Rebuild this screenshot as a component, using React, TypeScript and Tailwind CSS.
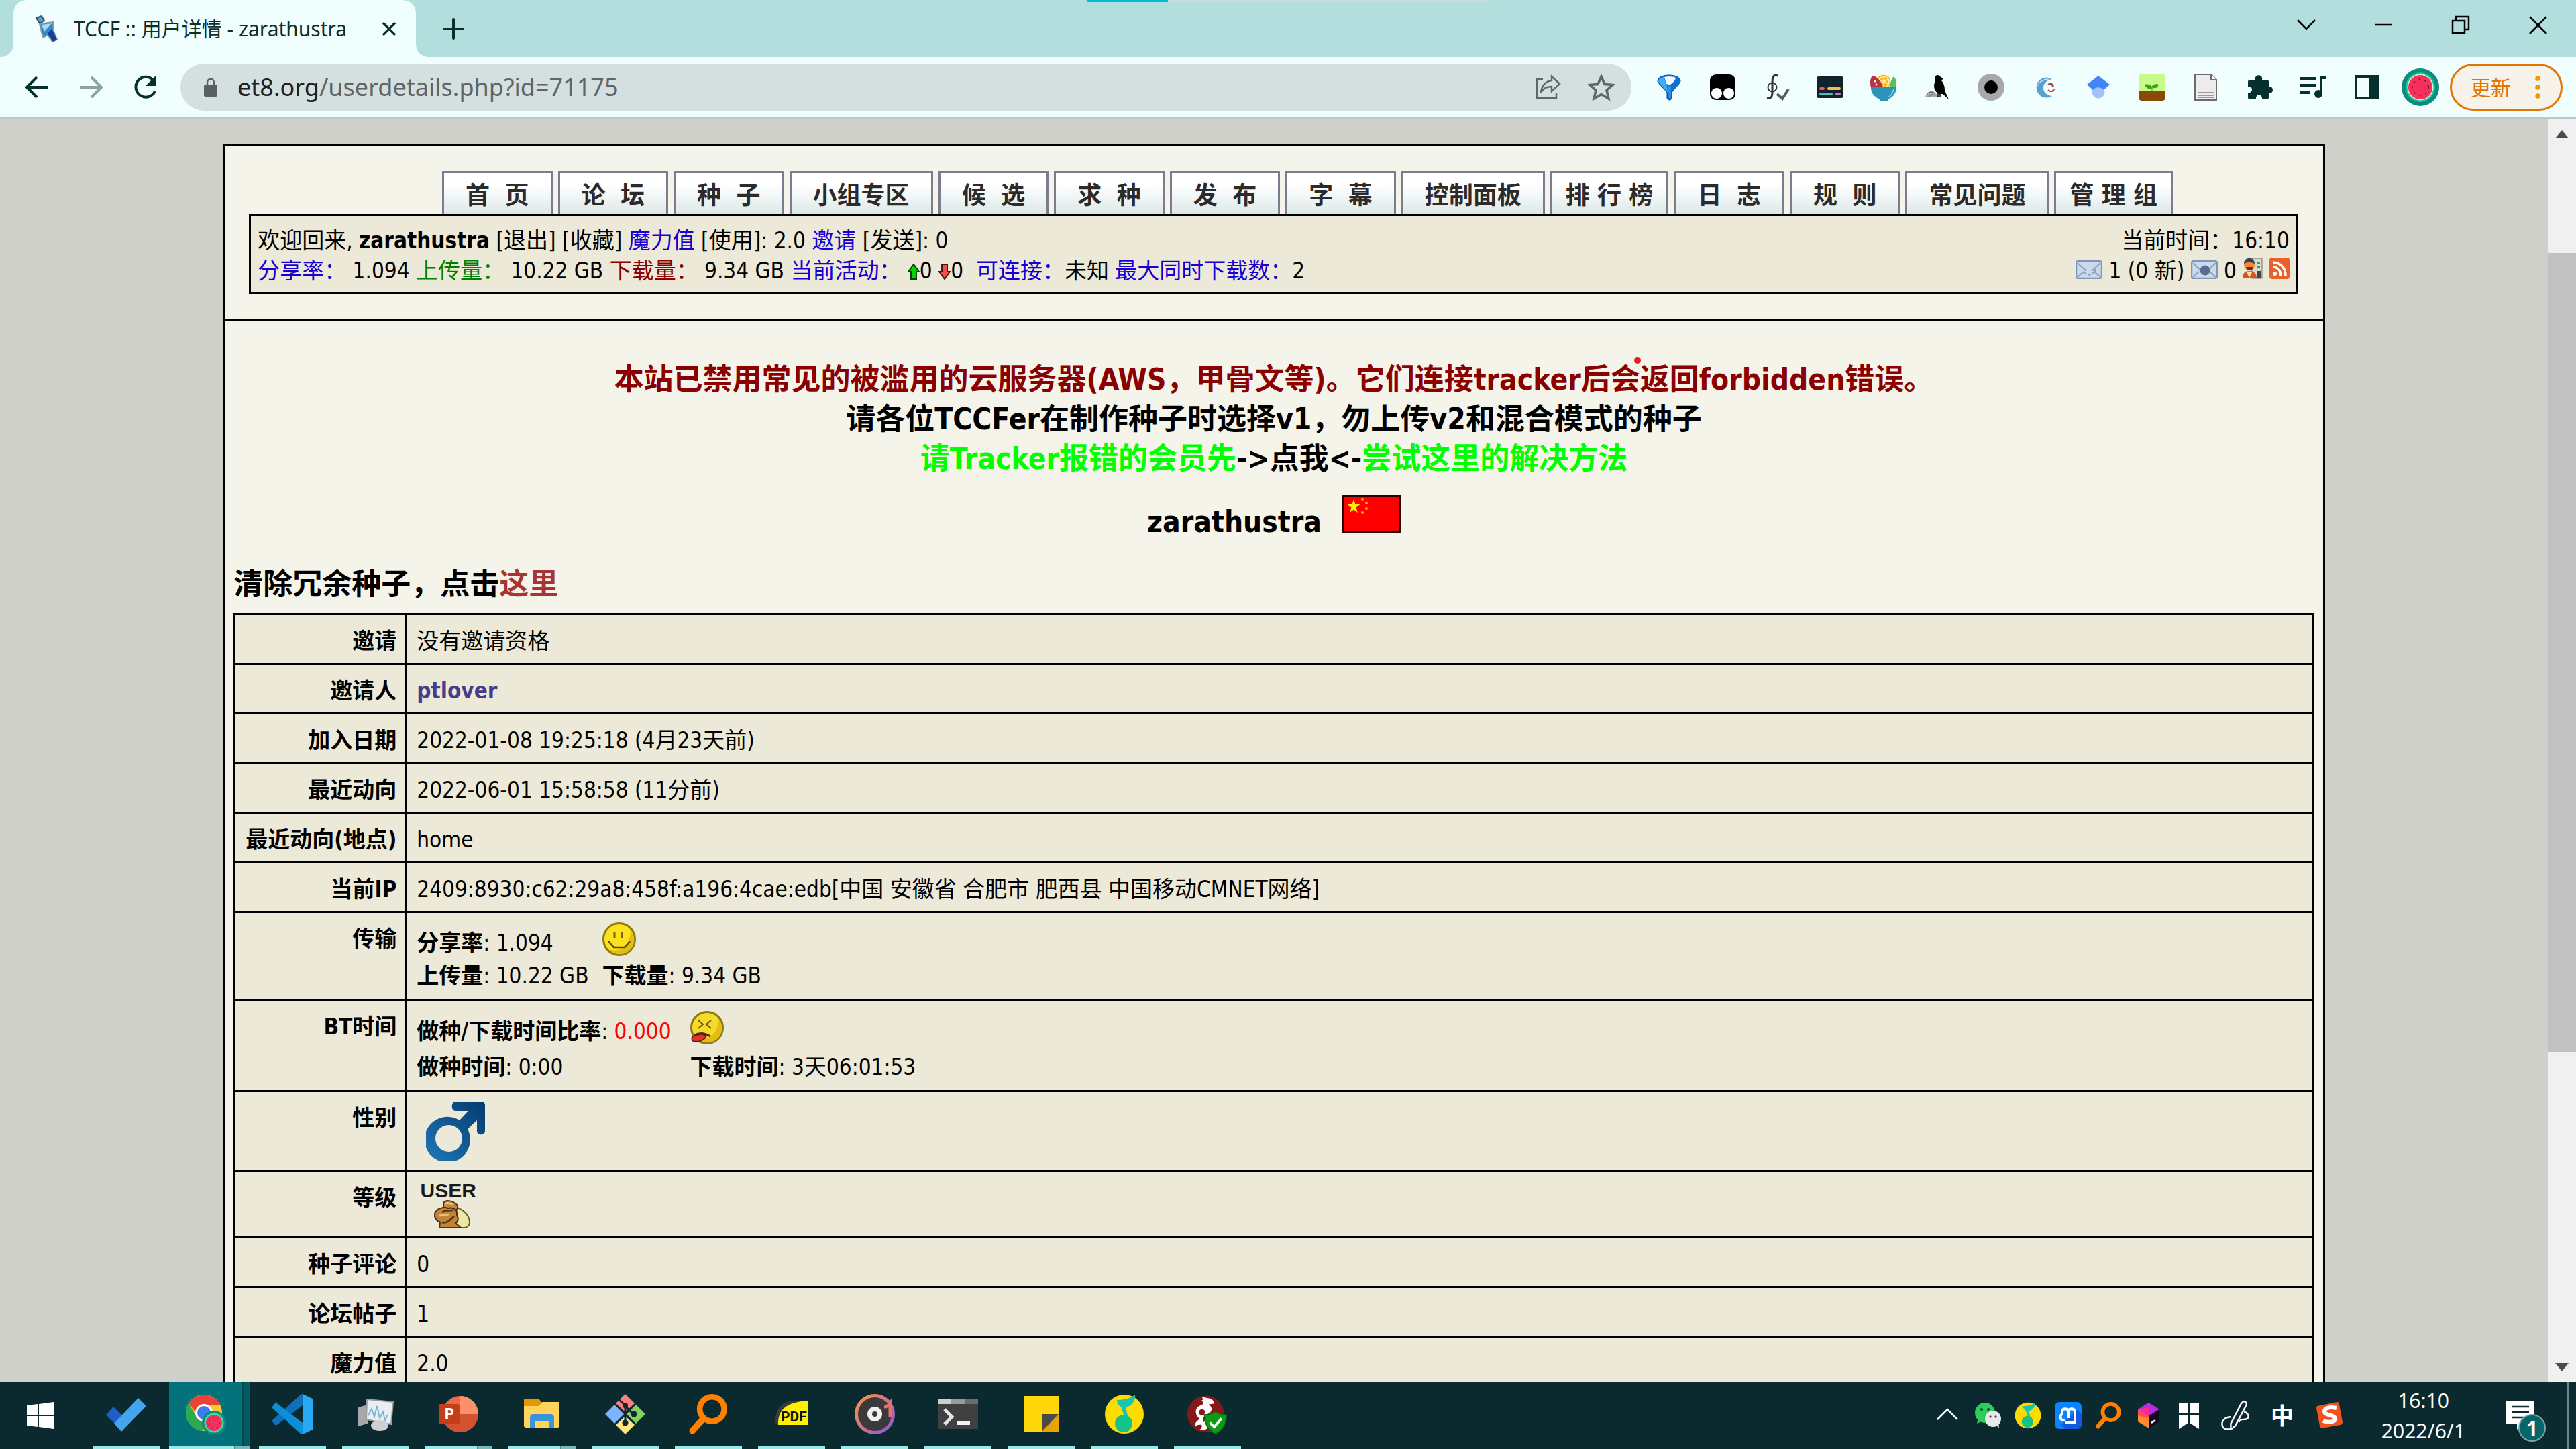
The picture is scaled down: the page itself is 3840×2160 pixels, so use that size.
import React from "react";

type IconProps = { size?: string; box?: string; children: React.ReactNode };

function Icon({ size = "w-10 h-10", box = "0 0 40 40", children }: IconProps) {
  return (
    <svg className={size + " shrink-0"} viewBox={box} fill="none" aria-hidden="true">
      {children}
    </svg>
  );
}

const OrangeLens = ({ size }: { size: string }) => (
  <Icon size={size} box="0 0 56 56">
    <circle cx="33" cy="21" r="17" stroke="#ff8000" strokeWidth="8" />
    <path d="M21 34 6 51" stroke="#ff8000" strokeWidth="9" strokeLinecap="round" />
  </Icon>
);

const QQMusic = ({ size }: { size: string }) => (
  <Icon size={size} box="0 0 60 60">
    <circle cx="30" cy="30" r="29" fill="#ffdc00" />
    <path d="M19 9c10 0 20-2 27-8 1 9-5 17-14 19l6 24-4 1-9-26c-4-2-6-6-6-10z" fill="#18c5b0" />
    <circle cx="29" cy="44" r="13" fill="#14c38a" />
  </Icon>
);

const Melon = ({ size }: { size: string }) => (
  <Icon size={size} box="0 0 56 56">
    <circle cx="28" cy="28" r="28" fill="#0f8b7b" />
    <circle cx="28" cy="28" r="22" fill="#10c8a0" />
    <circle cx="28" cy="28" r="19.500" fill="#d8f5d8" />
    <circle cx="28" cy="28" r="18" fill="#f5305c" />
    <circle cx="28" cy="28" r="12" stroke="#7a1030" strokeWidth="2" strokeDasharray="2 7" />
  </Icon>
);

/* ---------- browser chrome ---------- */

function TabStrip() {
  return (
    <header className="relative flex h-[85px] shrink-0 items-stretch bg-[#b2dfdd]">
      <div className="absolute top-0 left-[42.2%] flex h-[3px] w-[15.700%]">
        <span className="w-[20%] bg-[#00bcd4]" />
        <span className="flex-1 bg-[#cfd8d8]" />
      </div>
      <svg className="h-5 w-5 self-end" viewBox="0 0 20 20" aria-hidden="true">
        <path d="M20 0v20H0C12 20 20 12 20 0z" fill="#f0fffe" />
      </svg>
      <div className="flex w-[600px] items-center rounded-t-[20px] bg-[#f0fffe] pr-7 pl-8 text-[#0b2f2d]">
        <Icon size="w-9 h-10" box="0 0 36 40">
          <path d="M2 4l8-3 4 7-7 4z" fill="#4aa6d6" stroke="#39505e" strokeWidth="2" />
          <path d="M7 13l20-3 1 13 5 13-7 3-7-10-7 4z" fill="#2f86c8" stroke="#8b9aa5" strokeWidth="2" />
          <path d="M10 14l15-2-11 12z" fill="#a5dcf5" />
          <path d="M25 20l8 16-6 3-8-12z" fill="#123f9c" />
        </Icon>
        <span className="ml-[22px] flex-1 text-[30px] leading-10 whitespace-nowrap">TCCF :: 用户详情 - zarathustra</span>
        <button aria-label="关闭标签页">
          <Icon size="w-6 h-6" box="0 0 24 24">
            <path d="M3 3l18 18M21 3 3 21" stroke="#0b2f2d" strokeWidth="3.500" />
          </Icon>
        </button>
      </div>
      <svg className="h-5 w-5 self-end" viewBox="0 0 20 20" aria-hidden="true">
        <path d="M0 0v20h20C8 20 0 12 0 0z" fill="#f0fffe" />
      </svg>
      <button aria-label="新标签页" className="ml-4 flex w-10 items-center justify-center">
        <Icon size="w-8 h-8" box="0 0 32 32">
          <path d="M16 2v28M2 16h28" stroke="#0b2f2d" strokeWidth="4" strokeLinecap="round" />
        </Icon>
      </button>
      <div className="ml-auto flex pb-3">
        {[
          ["搜索标签页", "M7 13l13 13 13-13"],
          ["最小化", "M8 20h25"],
          ["还原", "M8 14h18v18H8zM13 14V8h19v19h-6"],
          ["关闭", "M8 8l25 25M33 8 8 33"],
        ].map(([name, d]) => (
          <button key={name} aria-label={name} className="flex w-[115px] items-center justify-center">
            <Icon>
              <path d={d} stroke="#000" strokeWidth="2.500" />
            </Icon>
          </button>
        ))}
      </div>
    </header>
  );
}

const extensions: [string, React.ReactNode][] = [
  [
    "筛选",
    <>
      <path d="M3 11C3-1 37-1 37 11c0 3-10 12-13 17v8c0 4-7 4-7 0v-8C14 23 3 14 3 11z" fill="#0a6fd8" stroke="#06468f" strokeWidth="1" />
      <path d="M4 11c2 5 9 10 14 17l-1-9-5-14c-4 1-8 3-8 6z" fill="#3fb0f7" />
      <path d="M13 5c6-2 14-1 17 1-1 5-5 8-9 11l-5-2z" fill="#eef8fe" />
      <path d="M18 18h5v18h-3z" fill="#2e8fe8" />
    </>,
  ],
  [
    "篡改猴",
    <>
      <rect x="1" y="1" width="38" height="38" rx="9" fill="#000" />
      <circle cx="11" cy="29" r="8" fill="#fff" />
      <circle cx="29" cy="29" r="8" fill="#fff" />
    </>,
  ],
  [
    "公式",
    <>
      <path d="M22 3c-7-3-8 4-8 10v14c0 7-2 11-8 9" stroke="#333" strokeWidth="3" />
      <circle cx="14" cy="20" r="6.500" stroke="#333" strokeWidth="2" />
      <path d="M21 30l8 7 9-14" stroke="#5a5a5a" strokeWidth="4" />
    </>,
  ],
  [
    "字幕",
    <>
      <rect y="4" width="40" height="32" rx="3" fill="#12222b" />
      <rect x="4" y="20" width="8" height="4" rx="2" fill="#f05560" />
      <rect x="16" y="20" width="20" height="4" rx="2" fill="#fdbb4a" />
      <rect x="4" y="28" width="20" height="4" rx="2" fill="#55b8bc" />
      <rect x="28" y="28" width="8" height="4" rx="2" fill="#c07ac8" />
    </>,
  ],
  [
    "沙拉查词",
    <>
      <path d="M1 20C-1 10 1 5 4 3c7 2 12 8 15 17z" fill="#b93340" />
      <path d="M29 19c1-7 3-12 6-15 4 4 5 10 3 15z" fill="#59c05a" />
      <circle cx="20" cy="12" r="10.500" fill="#fdb515" />
      <circle cx="20" cy="12" r="8" stroke="#fff0c0" strokeWidth="1.500" />
      <path d="M20 5v14M13 9l14 6M27 8l-14 8" stroke="#fff0c0" strokeWidth="1.500" />
      <path d="M1 20C-1 10 1 5 4 3c7 2 12 8 15 17z" fill="#b93340" />
      <circle cx="7" cy="11" r="1.500" fill="#fff" />
      <circle cx="9" cy="16" r="1.500" fill="#fff" />
      <path d="M1 20h38c0 9-5 14-12 18v2H14v-2C6 34 1 29 1 20z" fill="#2b94b8" />
      <path d="M35 23c-1 6-4 9-8 12" stroke="#9fd4e6" strokeWidth="1.500" />
    </>,
  ],
  [
    "乌鸦",
    <>
      <path d="M2 34c3-9 9-9 14-7l6 7z" fill="#aaa" />
      <path d="M4 31c3-5 9-5 12-2M8 34c2-4 6-4 9-1" stroke="#555" strokeWidth="1" />
      <path d="M16 6c1-5 7-5 9-1l4 2-3 3c4 5 5 9 5 15l6 13-9-8h-6c-7-4-8-12-6-17z" fill="#000" />
      <path d="M24 29v6M21 28v6" stroke="#000" strokeWidth="1.500" />
    </>,
  ],
  [
    "圆点",
    <>
      <circle cx="20" cy="20" r="20" fill="#a8a8a8" />
      <circle cx="20" cy="20" r="10" fill="#000" />
    </>,
  ],
  [
    "旋涡",
    <>
      <path d="M31 8A15 15 0 1 0 31 33c-6 0-13-4-13-12S25 9 31 8z" fill="#5a9fd0" />
      <path d="M28 8c-9-2-18 3-19 12 3-8 10-11 19-12z" fill="#cfe4f3" />
      <path d="M25 16c3-2 7-1 8 3M25 24c3 3 7 3 9-1M30 14l2 5" stroke="#a33a4a" strokeWidth="2" />
    </>,
  ],
  [
    "学术搜索",
    <>
      <circle cx="20" cy="27" r="9.500" fill="#a0c2fa" />
      <path d="M20 3l17 13-9 8c-3-5-13-5-16 0L3 16z" fill="#4285f4" />
    </>,
  ],
  [
    "幼苗",
    <>
      <rect width="40" height="40" rx="5" fill="#c6fb8a" />
      <path d="M0 26h40v9c0 3-2 5-5 5H5c-3 0-5-2-5-5z" fill="#8a4b08" />
      <path d="M20 26v-5M20 21c-1-4-4-5-10-5 0 4 4 7 10 5zM20 20c0-3 4-5 9-4 0 4-4 6-9 4z" fill="#3da017" stroke="#3da017" strokeWidth="1" />
    </>,
  ],
  [
    "文档",
    <>
      <path d="M4 1h24l8 8v30H4z" fill="#ececec" stroke="#6b6b6b" strokeWidth="2" />
      <path d="M28 1v8h8" fill="#fff" stroke="#6b6b6b" strokeWidth="2" />
      <path d="M8 28h24M8 32h24M8 35h24" stroke="#9a9a9a" strokeWidth="2" />
    </>,
  ],
  [
    "扩展程序",
    <path
      d="M3 12c0-2 1-3 3-3h8c-2-9 12-9 10 0h7c2 0 3 1 3 3v7c8-1 8 11 0 10v6c0 2-1 3-3 3h-7c1-9-10-9-9 0H6c-2 0-3-1-3-3v-7c8 1 8-10 0-9z"
      fill="#06302e"
    />,
  ],
  [
    "媒体控件",
    <>
      <path d="M1 7h24M1 17h24M1 28h15M32 30V6h7" stroke="#06302e" strokeWidth="4" />
      <circle cx="28" cy="30" r="6" fill="#06302e" />
    </>,
  ],
  ["侧边栏", <path d="M2 2h36v36H2zM6 6v28h17V6z" fill="#06302e" fillRule="evenodd" />],
];

function Toolbar() {
  return (
    <div className="flex h-[93px] shrink-0 items-center border-b-[3px] border-[#b9cccb] bg-[#f0fffe] pl-[14px]">
      {[
        ["后退", "M37 20H6M20 5 5 20l15 15", "#06302e"],
        ["前进", "M3 20h31M20 5l15 15-15 15", "#8ba3a1"],
      ].map(([name, d, c]) => (
        <button key={name} aria-label={name} className="flex w-[81px] justify-center">
          <Icon>
            <path d={d} stroke={c} strokeWidth="4" />
          </Icon>
        </button>
      ))}
      <button aria-label="重新加载" className="flex w-[81px] justify-center">
        <Icon>
          <path d="M34 26A15 15 0 1 1 31 9" stroke="#06302e" strokeWidth="4" />
          <path d="M36 2v16H20z" fill="#06302e" />
        </Icon>
      </button>
      <div className="mr-4 ml-3 flex h-[70px] flex-1 items-center rounded-full bg-[#d4e0df] pr-[5px] pl-[35px]">
        <Icon size="w-5 h-7" box="0 0 20 28">
          <rect y="10" width="20" height="18" rx="2.500" fill="#5a5f63" />
          <path d="M5 11V7c0-7 10-7 10 0v4" stroke="#5a5f63" strokeWidth="2.500" />
        </Icon>
        <a href="#address" className="ml-[30px] flex-1 text-[36px] leading-[48px] whitespace-nowrap text-[#5f6466]">
          <span className="text-[#202124]">et8.org</span>/userdetails.php?id=71175
        </a>
        <button aria-label="分享" className="flex w-[78px] justify-center">
          <Icon>
            <path d="M12 8H3v28h29v-7" stroke="#5a6866" strokeWidth="2.500" />
            <path d="M25 4l12 11-12 11v-7c-8 0-13 3-16 9 1-10 7-17 16-18z" stroke="#5a6866" strokeWidth="2.500" />
          </Icon>
        </button>
        <button aria-label="收藏" className="flex w-[80px] justify-center">
          <Icon>
            <path d="M20 4l5 11.500 12 1-9 8 3 12.500-11-6.500L9 37l3-12.500-9-8 12-1z" stroke="#5a6866" strokeWidth="3.500" />
          </Icon>
        </button>
      </div>
      {extensions.map(([name, art]) => (
        <button key={name} aria-label={name} className="flex w-20 justify-center">
          <Icon>{art}</Icon>
        </button>
      ))}
      <button aria-label="个人资料" className="flex w-20 justify-center">
        <Melon size="w-14 h-14" />
      </button>
      <button className="mr-5 ml-1 flex h-[70px] w-[168px] items-center justify-between rounded-full border-[3px] border-[#e37400] bg-[#f8f3ea] pr-[30px] pl-7 text-[30px] text-[#e37400]">
        更新
        <Icon size="w-2 h-9" box="0 0 8 36">
          <circle cx="4" cy="5" r="3.800" fill="#f29900" />
          <circle cx="4" cy="18" r="3.800" fill="#f29900" />
          <circle cx="4" cy="31" r="3.800" fill="#f29900" />
        </Icon>
      </button>
    </div>
  );
}

/* ---------- site ---------- */

const navItems = [
  "首  页",
  "论  坛",
  "种  子",
  "小组专区",
  "候  选",
  "求  种",
  "发  布",
  "字  幕",
  "控制面板",
  "排 行 榜",
  "日  志",
  "规  则",
  "常见问题",
  "管 理 组",
];

function MainNav() {
  return (
    <nav className="flex justify-center gap-2 pl-[100px]">
      {navItems.map((label) => (
        <a
          key={label}
          href="#nav"
          className={
            "border-x-[3px] border-t-[3px] border-[#7c7c8e] bg-linear-to-b from-white from-30% to-[#dce8e8] pt-3 pb-[5px] text-[36px] leading-[44px] font-bold whitespace-pre text-[#2f2a2a] " +
            (label.length === 5 ? "px-5" : "px-8")
          }
        >
          {label}
        </a>
      ))}
    </nav>
  );
}

const ArrowGlyph = ({ up }: { up: boolean }) => (
  <svg className="inline-block h-6 w-[18px] align-[-2px]" viewBox="0 0 18 24" aria-hidden="true">
    <path
      d={up ? "M9 1l8 11h-4v11H5V12H1z" : "M9 23l8-11h-4V1H5v11H1z"}
      fill={up ? "#00d800" : "#f05050"}
      stroke={up ? "#123a12" : "#4a1414"}
      strokeWidth="2"
    />
  </svg>
);

const Envelope = ({ out }: { out?: boolean }) => (
  <svg className="inline-block h-7 w-10 align-[-1px]" viewBox="0 0 40 28" aria-hidden="true">
    <rect x="1" y="1" width="38" height="26" rx="3" fill="#cbd9ea" stroke="#7f98b8" strokeWidth="2.500" />
    <path d="M3 4l13 12M37 4 24 16M3 25l9-8M37 25l-9-8" stroke="#8ba2bf" strokeWidth="2" />
    {out ? (
      <circle cx="21" cy="15" r="7.500" fill="#566f93" />
    ) : (
      <path d="M13 18c5 5 9 5 14 0M29 13v5" stroke="#8ba2bf" strokeWidth="2" fill="none" strokeDasharray="4 3" />
    )}
  </svg>
);

function InfoBar() {
  return (
    <section className="mr-[37px] ml-[36px] flex justify-between border-[3px] border-black bg-[#ece9d8] px-[10px] pt-[14px] pb-[10px] text-[33px] leading-[45px]">
      <div className="whitespace-pre">
        <p>
          欢迎回来, <b>zarathustra</b> [<a href="#out">退出</a>] [<a href="#fav">收藏</a>]{" "}
          <span className="text-[#1900d1]">魔力值</span> [<a href="#use">使用</a>]: 2.0{" "}
          <span className="text-[#1900d1]">邀请</span> [<a href="#send">发送</a>]: 0
        </p>
        <p>
          <span className="text-[#1900d1]">分享率：</span> 1.094 <span className="text-[#008000]">上传量：</span> 10.22 GB{" "}
          <span className="text-[#8b0000]">下载量：</span> 9.34 GB <span className="text-[#1900d1]">当前活动：</span>{" "}
          <ArrowGlyph up />0 <ArrowGlyph up={false} />0{"  "}
          <span className="text-[#1900d1]">可连接：</span>未知 <span className="text-[#1900d1]">最大同时下载数：</span>2
        </p>
      </div>
      <div className="text-right whitespace-pre">
        <p>当前时间：16:10</p>
        <p>
          <Envelope /> 1 (0 新) <Envelope out /> 0{" "}
          <svg className="inline-block h-8 w-[30px] align-[-1px]" viewBox="0 0 30 32" aria-hidden="true">
            <rect x="14" y="1" width="15" height="30" fill="#d8d8cc" stroke="#777" strokeWidth="1" />
            <path d="M22 6h4v4h-4zM22 12h4v4h-4z" fill="#3aa050" />
            <circle cx="10" cy="11" r="8" fill="#f08a30" />
            <path d="M2 9c0-11 16-11 16 0l-8-3z" fill="#3a3f55" />
            <path d="M5 14h11l-2 4H7z" fill="#8c1a10" />
            <path d="M0 31c0-8 4-11 10-11s11 3 11 11z" fill="#d9531e" />
            <path d="M6 22l4 8 4-8z" fill="#ffe0a0" />
            <path d="M22 20h5v11h-5z" fill="#444" />
          </svg>{" "}
          <svg className="inline-block h-8 w-[30px] align-[-1px]" viewBox="0 0 30 32" aria-hidden="true">
            <rect width="30" height="32" rx="4" fill="#e9622a" />
            <circle cx="8" cy="24" r="3" fill="#fff" />
            <path d="M5 14c7 0 12 5 12 13M5 7c11 0 19 8 19 20" stroke="#fff" strokeWidth="3.500" fill="none" />
          </svg>
        </p>
      </div>
    </section>
  );
}

const Smiley = () => (
  <Icon size="w-[50px] h-[50px]" box="0 0 50 50">
    <circle cx="25" cy="25" r="23.500" fill="#fde01e" stroke="#8d7a14" strokeWidth="3" />
    <path d="M42 12a21 21 0 0 1-32 28c14 6 32-4 32-28z" fill="#e3bd14" />
    <path d="M18 14v9M29 14v9" stroke="#7a6512" strokeWidth="3" />
    <path d="M9 28l8 9h16l8-9" stroke="#5a4a10" strokeWidth="2.500" />
  </Icon>
);

const SickFace = () => (
  <Icon size="w-[50px] h-[50px]" box="0 0 50 50">
    <circle cx="25" cy="25" r="23.500" fill="#f6dc28" stroke="#8d7a14" strokeWidth="3" />
    <path d="M42 12a21 21 0 0 1-32 28c14 6 32-4 32-28z" fill="#e3bd14" />
    <path d="M12 14l7 6-7 6M31 14l-7 6 7 6" stroke="#6a5812" strokeWidth="2" />
    <path d="M6 36c8-4 16-3 24 2" stroke="#4a3510" strokeWidth="3" />
    <path d="M4 38c6-3 14-4 20-1-2 7-12 10-20 8-3-3-2-5 0-7z" fill="#e2362a" stroke="#5a1510" strokeWidth="1.500" />
  </Icon>
);

const Male = () => (
  <Icon size="w-[88px] h-[88px]" box="0 0 88 88">
    <defs>
      <linearGradient id="male" x1="0" y1="1" x2="1" y2="0">
        <stop offset="0" stopColor="#1f79b8" />
        <stop offset="1" stopColor="#033a70" />
      </linearGradient>
    </defs>
    <path
      d="M44 0h38c4 0 6 2 6 6v38c0 7-12 7-12 0V28L62 41a34 34 0 1 1-12-13L63 14H44c-7 0-7-14 0-14zM34 35a20 20 0 1 0 .1 0z"
      fill="url(#male)"
      fillRule="evenodd"
    />
  </Icon>
);

const Pile = () => (
  <Icon size="w-[54px] h-[42px]" box="0 0 54 42">
    <path d="M34 11c12 4 19 13 19 22 0 5-4 8-8 8H30z" fill="#ece7a4" stroke="#6b5a20" strokeWidth="2" />
    <path d="M14 5c2-6 14-5 20 2 3 5 0 8-4 9l-16-5z" fill="#c48a3e" stroke="#4a2f10" strokeWidth="2" />
    <path d="M1 20c3-9 14-10 20-8 8-2 14 2 13 10 3 6 2 10-2 12l8 7H8L9 33C3 30 0 26 1 20z" fill="#c28438" stroke="#4a2f10" strokeWidth="2" />
    <path d="M12 33c8 2 12-4 18-9M12 18c6-4 10-2 16-3" stroke="#5a3408" strokeWidth="2.500" />
    <path d="M8 23c6-2 10 0 14-2M17 5c4-1 8 0 11 2" stroke="#eabf78" strokeWidth="3" />
  </Icon>
);

function Row({ label, children }: { label: string; children: React.ReactNode }) {
  return (
    <tr>
      <th
        scope="row"
        className="border-[3px] border-black pt-4 pr-[13px] pb-[10px] pl-[15px] text-right align-top font-bold whitespace-nowrap"
      >
        {label}
      </th>
      <td className="w-full border-[3px] border-black px-[14px] align-top">{children}</td>
    </tr>
  );
}

const Plain = ({ children }: { children: React.ReactNode }) => <div className="pt-4 pb-[10px]">{children}</div>;

function Details() {
  return (
    <table className="w-full border-collapse bg-[#ece9d8] text-[33px] leading-[45px]">
      <tbody>
        <Row label="邀请">
          <Plain>没有邀请资格</Plain>
        </Row>
        <Row label="邀请人">
          <Plain>
            <a href="#user" className="font-bold text-[#483d8b]">
              ptlover
            </a>
          </Plain>
        </Row>
        <Row label="加入日期">
          <Plain>2022-01-08 19:25:18 (4月23天前)</Plain>
        </Row>
        <Row label="最近动向">
          <Plain>2022-06-01 15:58:58 (11分前)</Plain>
        </Row>
        <Row label="最近动向(地点)">
          <Plain>home</Plain>
        </Row>
        <Row label="当前IP">
          <Plain>2409:8930:c62:29a8:458f:a196:4cae:edb[中国 安徽省 合肥市 肥西县 中国移动CMNET网络]</Plain>
        </Row>
        <Row label="传输">
          <div className="grid grid-cols-[auto_auto] items-end justify-start gap-x-5 gap-y-1 pt-[14px] pb-3 whitespace-nowrap">
            <span className="pt-2">
              <b>分享率</b>: 1.094
            </span>
            <span className="self-start">
              <Smiley />
            </span>
            <span>
              <b>上传量</b>: 10.22 GB
            </span>
            <span>
              <b>下载量</b>: 9.34 GB
            </span>
          </div>
        </Row>
        <Row label="BT时间">
          <div className="grid grid-cols-[auto_auto] items-end justify-start gap-x-[28px] gap-y-2 pt-[15px] pb-3 whitespace-nowrap">
            <span className="pt-2">
              <b>做种/下载时间比率</b>: <span className="text-[#ff0000]">0.000</span>
            </span>
            <span className="self-start">
              <SickFace />
            </span>
            <span>
              <b>做种时间</b>: 0:00
            </span>
            <span>
              <b>下载时间</b>: 3天06:01:53
            </span>
          </div>
        </Row>
        <Row label="性别">
          <div className="pt-[14px] pb-[14px] pl-[14px]">
            <Male />
          </div>
        </Row>
        <Row label="等级">
          <div className="flex w-[94px] flex-col items-center pt-[14px] pb-3">
            <span className="font-['Liberation_Sans',sans-serif] text-[30px] leading-7 font-bold text-[#1a1a1a]">USER</span>
            <span className="pl-3">
              <Pile />
            </span>
          </div>
        </Row>
        <Row label="种子评论">
          <Plain>0</Plain>
        </Row>
        <Row label="论坛帖子">
          <Plain>1</Plain>
        </Row>
        <Row label="魔力值">
          <Plain>2.0</Plain>
        </Row>
      </tbody>
    </table>
  );
}

const Flag = () => (
  <Icon size="w-[88px] h-[56px]" box="0 0 88 56">
    <rect x="1.500" y="1.500" width="85" height="53" fill="#ff0000" stroke="#2a0000" strokeWidth="3" />
    <path d="M18 7l2.500 7h7l-6 4.500 2.500 7.500-6-4.500-6 4.500 2.500-7.500-6-4.500h7z" fill="#ffee00" />
    <circle cx="31" cy="7" r="2" fill="#f8b800" />
    <circle cx="37" cy="12" r="2" fill="#f8b800" />
    <circle cx="37" cy="20" r="2" fill="#f8b800" />
    <circle cx="31" cy="26" r="2" fill="#f8b800" />
  </Icon>
);

function Site() {
  return (
    <div className="flex min-h-0 flex-1 overflow-hidden bg-[#cfd0ca]">
      <div className="min-w-0 flex-1 px-[8.650%] pt-9 font-['DejaVu_Sans_Condensed','Noto_Sans_CJK_SC',sans-serif] text-black">
        <div className="border-[3px] border-black bg-[#f5f4ea]">
          <div className="border-b-[3px] border-black pt-[38px] pb-9">
            <MainNav />
            <InfoBar />
          </div>
          <main className="px-[13px] pt-[58px]">
            <div className="relative text-center text-[44px] leading-[59px] font-bold">
              <p className="text-[#8b0000]">
                本站已禁用常见的被滥用的云服务器(AWS，甲骨文等)。它们连接tracker后会返回forbidden错误。
              </p>
              <p>请各位TCCFer在制作种子时选择v1，勿上传v2和混合模式的种子</p>
              <p className="text-[#00ff00]">
                请Tracker报错的会员先<a href="#help" className="text-black">-&gt;点我&lt;-</a>尝试这里的解决方法
              </p>
              <span className="absolute -top-1 left-[67.300%] h-[10px] w-[10px] rounded-full bg-[#ee1c1c]" />
            </div>
            <h1 className="mt-[25px] flex items-start justify-center gap-[30px] text-[44px] leading-[59px] font-bold">
              <span className="pt-[10px]">zarathustra</span>
              <Flag />
            </h1>
            <h2 className="mt-[34px] mb-[14px] text-[44px] leading-[59px] font-bold">
              清除冗余种子，点击<a href="#clean" className="text-[#aa3333]">这里</a>
            </h2>
            <Details />
          </main>
        </div>
      </div>
      <div className="flex w-[42px] flex-col items-center bg-[#f0f0f0] py-4" aria-hidden="true">
        <svg className="h-3 w-5" viewBox="0 0 20 12">
          <path d="M10 0l10 12H0z" fill="#4a4a4a" />
        </svg>
        <div className="flex w-full flex-1 flex-col py-6">
          <div className="h-[8.250%]" />
          <div className="h-[67%] w-full bg-[#c1c1c1]" />
        </div>
        <svg className="h-3 w-5" viewBox="0 0 20 12">
          <path d="M10 12 0 0h20z" fill="#4a4a4a" />
        </svg>
      </div>
    </div>
  );
}

/* ---------- taskbar ---------- */

const S = "w-[60px] h-[60px]";

const apps: { name: string; art: React.ReactNode; active?: boolean; stack?: boolean }[] = [
  {
    name: "待办",
    art: (
      <Icon size={S} box="0 0 60 60">
        <path d="M0 31l11-12 14 14-11 12z" fill="#1f5ec4" />
        <path d="M48 6l12 12-37 38-11-12z" fill="#42a5f0" />
      </Icon>
    ),
  },
  {
    name: "浏览器",
    active: true,
    stack: true,
    art: (
      <Icon size={S} box="0 0 60 60">
        <circle cx="27" cy="28" r="27" fill="#fcc934" />
        <path d="M4 14a27 27 0 0 1 47 2H27c-8 0-12 6-12 12z" fill="#ea4335" />
        <path d="M4 14 16 34c3 5 8 7 14 6l-6 15A27 27 0 0 1 4 14z" fill="#2da94f" />
        <circle cx="27" cy="28" r="13" fill="#fff" />
        <circle cx="27" cy="28" r="10" fill="#3b7de9" />
        <circle cx="42" cy="43" r="18" fill="#0f8b7b" />
        <circle cx="42" cy="43" r="14.500" fill="#3ddca8" />
        <circle cx="42" cy="43" r="12" fill="#f5305c" />
        <circle cx="42" cy="43" r="8" stroke="#8a1535" strokeWidth="1.500" strokeDasharray="2 5" />
      </Icon>
    ),
  },
  {
    name: "代码编辑器",
    art: (
      <Icon size={S} box="0 0 60 60">
        <path d="M45 0v17L7 46c-2 1-3 0-4-1l-3-4v-2L42 1z" fill="#0f6fb8" />
        <path d="M45 60V43L7 14c-2-1-3 0-4 1l-3 4v2l42 38z" fill="#0b8fd8" />
        <path d="M45 0l15 7v46l-15 7z" fill="#29a9f2" />
      </Icon>
    ),
  },
  {
    name: "资源监视器",
    art: (
      <Icon size={S} box="0 0 60 60">
        <path d="M4 20l14-4v28L4 48z" fill="#a8a8a8" />
        <path d="M17 8l39 4-3 33-37-7z" fill="#e8eef2" stroke="#9a9a9a" strokeWidth="2" />
        <path d="M19 32l5-10 4 12 4-16 4 18 5-9 3 12 4-8" stroke="#7fb4dc" strokeWidth="2" />
        <ellipse cx="36" cy="47" rx="13" ry="8" fill="#cfcfcf" />
      </Icon>
    ),
  },
  {
    name: "演示文稿",
    stack: true,
    art: (
      <Icon size={S} box="0 0 60 60">
        <circle cx="32" cy="30" r="27" fill="#ed6c47" />
        <path d="M32 3a27 27 0 0 1 27 27H32z" fill="#ff8f6b" />
        <path d="M5 30h54a27 27 0 0 1-54 0z" fill="#d35230" />
        <rect y="15" width="31" height="30" rx="3" fill="#c43e1c" />
        <text x="8" y="38" fontSize="24" fontWeight="700" fill="#fff" fontFamily="Open Sans, sans-serif">P</text>
      </Icon>
    ),
  },
  {
    name: "文件资源管理器",
    stack: true,
    art: (
      <Icon size={S} box="0 0 60 60">
        <path d="M3 9c0-1 1-2 2-2h20l4 5v6H3z" fill="#e09a00" />
        <path d="M3 18h22l5-6h26v35c0 2-1 3-3 3H6c-2 0-3-1-3-3z" fill="#ffd35c" />
        <path d="M12 51V35c0-3 2-5 5-5h26c3 0 5 2 5 5v16h-8V41H20v10z" fill="#3a94dd" />
      </Icon>
    ),
  },
  {
    name: "版本管理",
    art: (
      <Icon size={S} box="0 0 60 60">
        <path d="M30 0l14 14-14 13-14-13z" fill="#ff7f80" />
        <path d="M14 16l14 14-14 14L0 30z" fill="#80b3ff" />
        <path d="M46 16l14 14-14 14-14-14z" fill="#87d25f" />
        <path d="M30 33l14 13-14 14-14-14z" fill="#ffe680" />
        <path d="M20 8l10 9v27M30 18l12 12" stroke="#0b2a30" strokeWidth="3" />
        <circle cx="30" cy="17" r="4" fill="#0b2a30" />
        <circle cx="43" cy="30" r="4.500" fill="#0b2a30" />
        <circle cx="30" cy="43" r="4.500" fill="#0b2a30" />
      </Icon>
    ),
  },
  { name: "搜索", art: <OrangeLens size={S} /> },
  {
    name: "PDF",
    art: (
      <Icon size={S} box="0 0 60 60">
        <path d="M6 46C4 26 14 10 34 10h20L20 40z" fill="#3a3a3a" />
        <path d="M10 46c-1-22 12-34 44-36v36z" fill="#ffee00" />
        <text x="14" y="41" fontSize="21" fontWeight="700" fill="#111" fontFamily="Roboto, sans-serif">PDF</text>
      </Icon>
    ),
  },
  {
    name: "音乐播放器",
    art: (
      <Icon size={S} box="0 0 60 60">
        <defs>
          <linearGradient id="disc" x1="0" y1="0" x2="1" y2="1">
            <stop offset="0" stopColor="#ff9a3c" />
            <stop offset="0.600" stopColor="#c9689a" />
            <stop offset="1" stopColor="#6c5ce0" />
          </linearGradient>
        </defs>
        <circle cx="30" cy="30" r="30" fill="url(#disc)" />
        <circle cx="30" cy="30" r="25" fill="#3a3a3c" />
        <path d="M44 19c4 0 7-2 9-5v20" stroke="#e0736a" strokeWidth="5" />
        <circle cx="30" cy="30" r="11" fill="#f0f0f0" />
        <circle cx="30" cy="30" r="4" fill="#3a3a3c" />
      </Icon>
    ),
  },
  {
    name: "终端",
    art: (
      <Icon size={S} box="0 0 60 60">
        <rect y="8" width="60" height="44" rx="1" fill="#3f4042" />
        <path d="M0 8h20v7H0z" fill="#cfcfcf" />
        <path d="M20 8h20v7H20z" fill="#9a9a9a" />
        <path d="M40 8h20v7H40z" fill="#6c6c6c" />
        <path d="M10 23l11 11-11 11" stroke="#e6e6e6" strokeWidth="5" />
        <rect x="28" y="40" width="20" height="6" fill="#f2f2f2" />
      </Icon>
    ),
  },
  {
    name: "便笺",
    art: (
      <Icon size={S} box="0 0 60 60">
        <path d="M4 3h52v27L31 56H4z" fill="#ffd60a" />
        <path d="M31 30h25L31 56z" fill="#4a4a4a" />
        <path d="M56 30v26H31z" fill="#e8a400" />
      </Icon>
    ),
  },
  { name: "QQ音乐", art: <QQMusic size={S} /> },
  {
    name: "WireGuard",
    art: (
      <Icon size={S} box="0 0 66 64">
        <circle cx="30" cy="32" r="30" fill="#88171a" />
        <path d="M24 4l10 2c7 1 10 5 9 9l-8 1c8 6 5 13-2 16-8 4-9 9-6 13 4-3 9-1 10 4-2 8-10 10-18 9 4-2 6-5 4-9-4 1-7-1-11 5 0-9 5-12 9-14-9-6-10-18 0-22 7-2 6-6 2-8l3-2z" fill="#fff" />
        <circle cx="24" cy="29" r="5" fill="#88171a" />
        <path d="M46 28c6 4 12 5 18 5 0 14-5 25-18 31-13-6-18-17-18-31 6 0 12-1 18-5z" fill="#0a9a14" stroke="#056a0c" strokeWidth="1.500" />
        <path d="M37 46l7 7 12-14" stroke="#fff" strokeWidth="4" />
      </Icon>
    ),
  },
];

const T = "w-10 h-10";

const tray: [string, React.ReactNode, string][] = [
  ["显示隐藏的图标", <Icon size={T}><path d="M5 26l15-15 15 15" stroke="#fff" strokeWidth="2.500" /></Icon>, "w-[60px]"],
  [
    "微信",
    <Icon size={T}>
      <circle cx="16" cy="16" r="15" fill="#2ecc5e" />
      <path d="M6 24l-2 8 9-4z" fill="#2ecc5e" />
      <circle cx="11" cy="11" r="2" fill="#0b4a20" />
      <circle cx="21" cy="11" r="2" fill="#0b4a20" />
      <circle cx="28" cy="25" r="12" fill="#e9e9e9" />
      <path d="M31 34l6 4-1-7z" fill="#e9e9e9" />
      <circle cx="24" cy="22" r="1.800" fill="#555" />
      <circle cx="32" cy="22" r="1.800" fill="#555" />
    </Icon>,
    "w-[60px]",
  ],
  ["QQ音乐", <QQMusic size={T} />, "w-[60px]"],
  [
    "网盘",
    <Icon size={T}>
      <rect width="40" height="40" rx="7" fill="#0a84ff" />
      <path d="M33 12l7 6v15c0 4-3 7-7 7H16l-6-6z" fill="#1457e0" />
      <path d="M20 24V14c0-5-9-5-9 0v4c-4 2-4 10 4 9M20 14c0-5 10-5 10 0v17H16" stroke="#fff" strokeWidth="4" />
    </Icon>,
    "w-[60px]",
  ],
  ["搜索", <OrangeLens size={T} />, "w-[60px]"],
  [
    "开发工具",
    <Icon size={T}>
      <path d="M20 1L4 11v18l16 10z" fill="#ff4a5a" />
      <path d="M4 20v9l16 10V24z" fill="#ff8a2a" />
      <path d="M20 1l16 10-16 10L4 11z" fill="#b82ae8" />
      <path d="M4 11l16 10V8z" fill="#ff2a8a" />
      <path d="M36 11v18L20 39V21z" fill="#100818" />
      <path d="M24 31l6-4" stroke="#fff" strokeWidth="2.500" />
    </Icon>,
    "w-[60px]",
  ],
  [
    "书签",
    <Icon size={T}>
      <path d="M5 2h14v15H5zM21 2h14v15H21zM5 20h14v11L5 40zM21 20h14v20L21 31z" fill="#fff" />
    </Icon>,
    "w-[60px]",
  ],
  [
    "手写笔",
    <Icon size="w-11 h-11">
      <path d="M31 1c3 0 5 2 4 5L20 34l-6 5 0-8L28 4z" stroke="#fff" strokeWidth="2.200" />
      <path d="M14 22c-8 0-14 6-11 13 2 4 7 4 10 3M32 15c6 2 8 8 3 10-5 1-8-1-10 4" stroke="#fff" strokeWidth="2.200" />
    </Icon>,
    "w-[78px]",
  ],
  ["输入法", <span className="text-[34px] leading-10 font-bold text-white">中</span>, "w-[62px]"],
  [
    "搜狗输入法",
    <Icon size={T}>
      <path d="M1 6l30-6c2 0 3 1 3 3l5 27c0 2-1 3-3 4L8 39c-2 0-3-1-3-3L0 9z" fill="#f4511e" />
      <path d="M30 9c-8-2-18-1-18 5 0 7 16 4 16 11 0 5-10 6-18 3" stroke="#fff" strokeWidth="6" />
    </Icon>,
    "w-[80px]",
  ],
];

function Taskbar() {
  return (
    <footer className="flex h-[100px] shrink-0 items-stretch bg-[#0b2a30]">
      <button aria-label="开始" className="flex w-[126px] items-center pl-10">
        <Icon size={T}>
          <path d="M0 5l16-2v16H0zM18 3l22-3v19H18zM0 21h16v16L0 35zM18 21h22v19l-22-3z" fill="#fff" />
        </Icon>
      </button>
      {apps.map((a) => (
        <button key={a.name} aria-label={a.name} className={"flex w-[124px] " + (a.active ? "px-[2px]" : "px-3")}>
          <span className={"flex w-full flex-col self-stretch " + (a.active ? "bg-[#04727a]" : "")}>
            <span className="flex flex-1 justify-end">
              <span className="flex flex-1 items-center justify-center">{a.art}</span>
              {a.active && <span className="w-[11px] border-l-[3px] border-[#04464e] bg-[#035b63]" />}
            </span>
            <span className="flex h-[5px] bg-[#99e8ea]">
              {a.stack && <span className="ml-auto w-[23px] border-l-2 border-[#4f8a8c] bg-[#7ab8ba]" />}
            </span>
          </span>
        </button>
      ))}
      <div className="ml-auto flex items-center text-white">
        {tray.map(([name, art, w]) => (
          <button key={name} aria-label={name} className={"flex justify-center " + w}>
            {art}
          </button>
        ))}
        <div className="w-[199px] text-center text-[30px] leading-[45px]">
          <p>16:10</p>
          <p>2022/6/1</p>
        </div>
        <button aria-label="通知" className="relative ml-6 flex w-[91px] items-center self-stretch">
          <Icon size="w-11 h-11" box="0 0 44 44">
            <path d="M0 0h42v34H24l-8 9v-9H0z" fill="#fff" />
            <path d="M8 9h26M8 17h26M8 25h18" stroke="#0b2a30" strokeWidth="2.500" />
          </Icon>
          <span className="absolute bottom-[11px] left-[18px] flex h-[41px] w-[41px] items-center justify-center rounded-full border-2 border-[#7fa5a8] bg-[#04656c] text-[30px] leading-none font-bold">
            1
          </span>
        </button>
        <span className="mr-[11px] self-stretch border-l-2 border-[#6f8589]" />
      </div>
    </footer>
  );
}

export default function App() {
  return (
    <div
      lang="zh-CN"
      className="flex h-screen w-full flex-col overflow-hidden font-['Noto_Sans','Noto_Sans_CJK_SC',sans-serif]"
    >
      <TabStrip />
      <Toolbar />
      <Site />
      <Taskbar />
    </div>
  );
}
